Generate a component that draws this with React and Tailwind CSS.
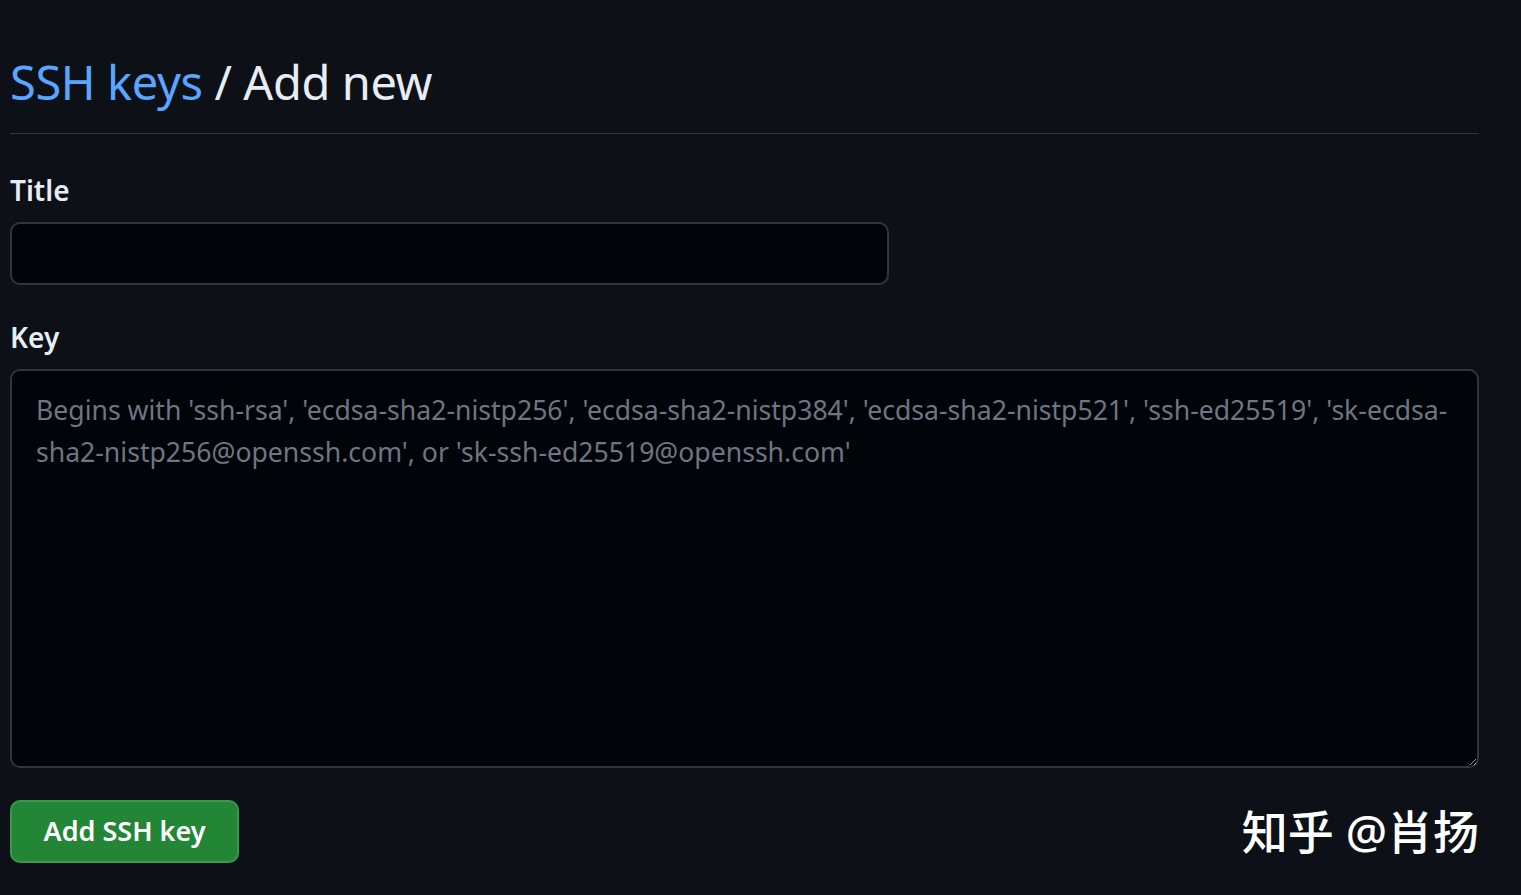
export default function App() {
  const font = { fontFamily: '"Noto Sans", "Noto Sans CJK SC", sans-serif' };
  return (
    <div className="min-h-[895px] w-[1521px] bg-[#0d1117] text-[#e6edf3]" style={font}>
      <div className="w-[1479px] pl-[10px] pt-[48px]">
        <div className="border-b border-[#30363d] pb-[17px]">
          <h2 className="text-[47px] leading-[68px] font-normal tracking-[-0.4px]">
            <a className="text-[#58a6ff]">SSH keys</a> / Add new
          </h2>
        </div>

        <form className="mt-[38px]">
          <label className="block text-[28px] leading-[36px] font-semibold">Title</label>
          <input
            type="text"
            className="mt-[14px] block h-[63px] w-[879px] rounded-[10px] border-2 border-[#30363d] bg-[#010409] px-[20px] text-[26px] outline-none"
          />

          <label className="mt-[34px] block text-[28px] leading-[36px] font-semibold">Key</label>
          <textarea
            className="mt-[14px] block h-[399px] w-full resize-y rounded-[10px] border-2 border-[#30363d] bg-[#010409] px-[24px] pt-[18px] pb-[16px] text-[26.6px] leading-[42px] text-[#e6edf3] outline-none placeholder:text-[#6e7681]"
            placeholder="Begins with 'ssh-rsa', 'ecdsa-sha2-nistp256', 'ecdsa-sha2-nistp384', 'ecdsa-sha2-nistp521', 'ssh-ed25519', 'sk-ecdsa-sha2-nistp256@openssh.com', or 'sk-ssh-ed25519@openssh.com'"
          />

          <div className="mt-[32px] flex items-center justify-between">
            <button
              type="button"
              className="h-[63px] w-[229px] rounded-[10px] border-2 border-[#3b9a4a] bg-[#238636] text-[27px] font-semibold text-white"
            >
              Add SSH key
            </button>
            <span className="-mt-[2px] text-[46px] font-medium leading-none text-white">知乎 @肖扬</span>
          </div>
        </form>
      </div>
    </div>
  );
}
